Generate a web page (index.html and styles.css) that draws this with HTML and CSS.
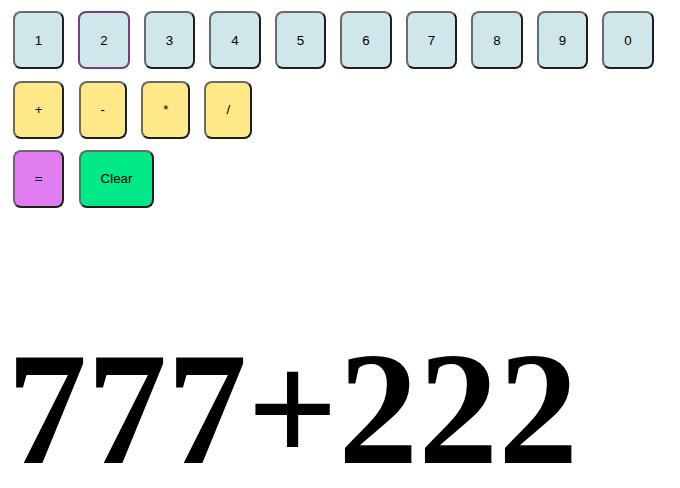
FILE: index.html
```html
<!DOCTYPE html>
<html>
<head>
<meta charset="utf-8">
<link rel="stylesheet" href="styles.css">
</head>
<body>
<div class="pad">
  <div class="row">
    <button class="key num">1</button>
    <button class="key num hover">2</button>
    <button class="key num">3</button>
    <button class="key num">4</button>
    <button class="key num">5</button>
    <button class="key num">6</button>
    <button class="key num">7</button>
    <button class="key num">8</button>
    <button class="key num">9</button>
    <button class="key num">0</button>
  </div>
  <div class="row">
    <button class="key op">+</button>
    <button class="key op">-</button>
    <button class="key op">*</button>
    <button class="key op">/</button>
  </div>
  <div class="row">
    <button class="key eq">=</button>
    <button class="key clear">Clear</button>
  </div>
</div>
<div class="display">777+222</div>
</body>
</html>
```

FILE: styles.css
```css
html, body {
  margin: 0;
  padding: 0;
  background: #ffffff;
}
body {
  font-family: "Liberation Serif", serif;
  overflow: hidden;
  width: 680px;
  height: 488px;
}
.pad {
  display: flex;
  flex-direction: column;
  gap: 11.3px;
  padding: 11.3px 0 0 12.7px;
}
.row {
  display: flex;
  gap: 14.1px;
}
.key {
  box-sizing: border-box;
  height: 58px;
  padding: 0 20px;
  margin: 0;
  font-family: "Liberation Sans", Arial, sans-serif;
  font-size: 13.333px;
  color: #000;
  border-width: 2px;
  border-style: solid;
  border-color: #6a6a6a #1e1e1e #1e1e1e #6a6a6a;
  border-radius: 8px;
  line-height: 15px;
}
.num { background: #cfe6ea; }
.op { background: #ffe888; }
.eq { background: #e07ef1; }
.clear { background: #00e887; }
.hover {
  border: 2px solid #7b3b7e;
}
.display {
  font-family: "Liberation Serif", "Times New Roman", serif;
  font-weight: bold;
  font-size: 160px;
  line-height: 160px;
  margin-top: 121px;
  margin-left: 7px;
  white-space: nowrap;
}
```
